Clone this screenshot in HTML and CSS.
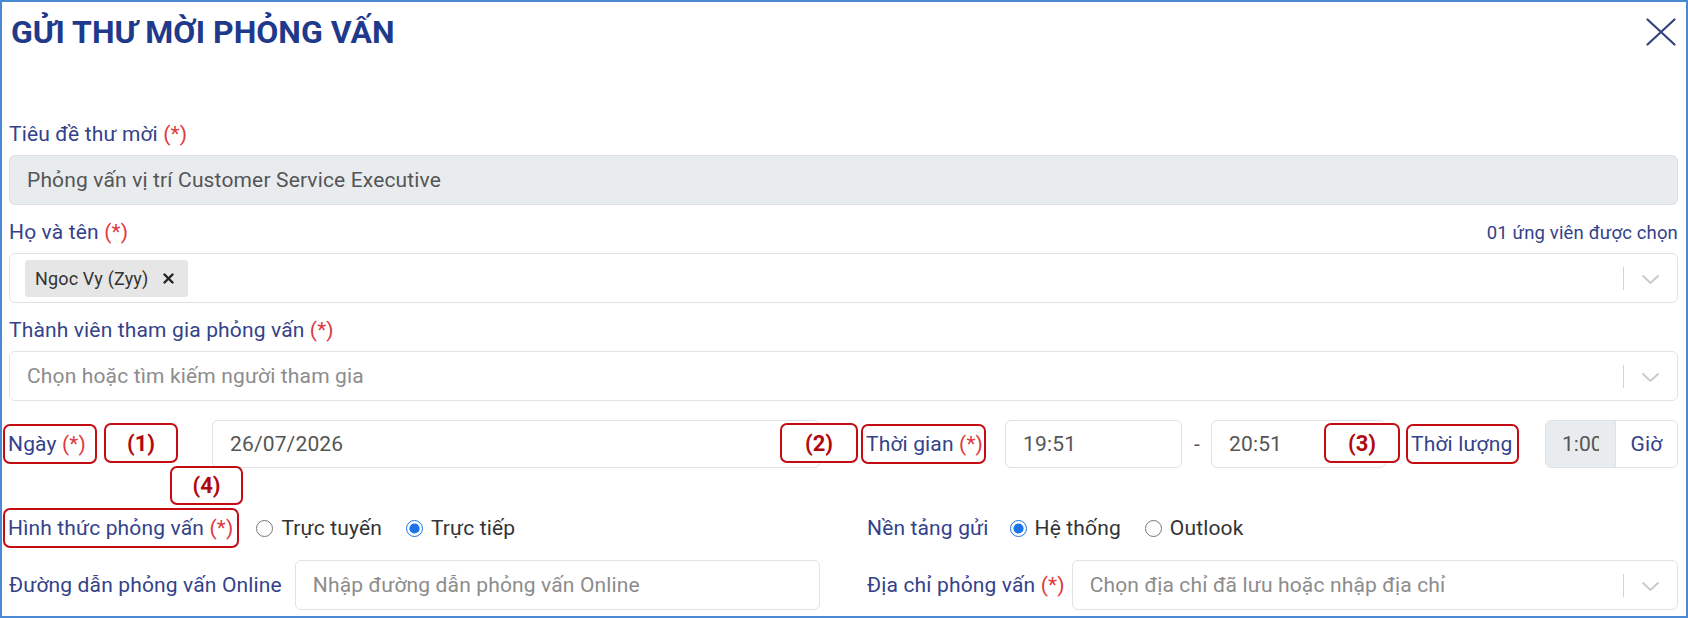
FILE: index.html
```html
<!DOCTYPE html>
<html lang="vi">
<head>
  <meta charset="UTF-8">
  <meta name="viewport" content="width=device-width, initial-scale=1.0">
  <title>Gửi thư mời phỏng vấn</title>
  <link rel="stylesheet" href="styles.css">
</head>
<body>

  <div class="modal">
    <header class="modal-head">
      <h1>GỬI THƯ MỜI PHỎNG VẤN</h1>
      <button class="close" type="button" aria-label="Đóng">
        <svg width="30" height="28" viewBox="0 0 30 28"><path d="M1.5 1.5L28.5 26.5M28.5 1.5L1.5 26.5" stroke="#34427f" stroke-width="2.2" stroke-linecap="round" fill="none"/></svg>
      </button>
    </header>

    <form class="modal-body">
      <!-- Tiêu đề -->
      <div class="field">
        <label class="lbl">Tiêu đề thư mời <span class="req">(*)</span></label>
        <input class="ctl ctl-readonly" type="text" value="Phỏng vấn vị trí Customer Service Executive" readonly>
      </div>

      <!-- Ứng viên -->
      <div class="field">
        <div class="lbl-row">
          <label class="lbl">Họ và tên <span class="req">(*)</span></label>
          <span class="count">01 ứng viên được chọn</span>
        </div>
        <div class="select">
          <div class="select-value">
            <span class="chip">Ngoc Vy (Zyy)
              <svg class="chip-x" width="11" height="11" viewBox="0 0 11 11"><path d="M1.5 1.5L9.5 9.5M9.5 1.5L1.5 9.5" stroke="#222" stroke-width="2.4" stroke-linecap="round"/></svg>
            </span>
          </div>
          <span class="sep"></span>
          <span class="caret"><svg width="19" height="11" viewBox="0 0 19 11"><polyline points="1.5,1.5 9.5,9 17.5,1.5" fill="none" stroke="#c9c9c9" stroke-width="1.8"/></svg></span>
        </div>
      </div>

      <!-- Thành viên -->
      <div class="field">
        <label class="lbl">Thành viên tham gia phỏng vấn <span class="req">(*)</span></label>
        <div class="select">
          <div class="select-value placeholder">Chọn hoặc tìm kiếm người tham gia</div>
          <span class="sep"></span>
          <span class="caret"><svg width="19" height="11" viewBox="0 0 19 11"><polyline points="1.5,1.5 9.5,9 17.5,1.5" fill="none" stroke="#c9c9c9" stroke-width="1.8"/></svg></span>
        </div>
      </div>

      <!-- Ngày / thời gian -->
      <div class="row row-date">
        <div class="col">
          <div class="lbl-cell">
            <span class="lbl mark mark-wide">Ngày&nbsp;<span class="req">(*)</span></span>
          </div>
          <input class="ctl grow" type="text" value="26/07/2026">
        </div>
        <div class="col">
          <span class="lbl mark mark-tight">Thời gian&nbsp;<span class="req">(*)</span></span>
          <input class="ctl time t-start" type="text" value="19:51">
          <span class="dash">-</span>
          <input class="ctl time t-end" type="text" value="20:51">
          <span class="lbl mark mark-dur">Thời lượng</span>
          <div class="duration">
            <input class="dur-val" type="text" value="1:00" readonly>
            <span class="dur-unit">Giờ</span>
          </div>
        </div>

        <span class="badge b1">(1)</span>
        <span class="badge b2">(2)</span>
        <span class="badge b3">(3)</span>
        <span class="badge b4">(4)</span>
      </div>

      <!-- Hình thức / nền tảng -->
      <div class="row row-radio">
        <div class="col">
          <span class="lbl mark mark-type">Hình thức phỏng vấn&nbsp;<span class="req">(*)</span></span>
          <div class="radios first">
            <label class="opt"><input type="radio" name="mode"> Trực tuyến</label>
            <label class="opt"><input type="radio" name="mode" checked> Trực tiếp</label>
          </div>
        </div>
        <div class="col">
          <span class="lbl">Nền tảng gửi</span>
          <div class="radios platform">
            <label class="opt"><input type="radio" name="platform" checked> Hệ thống</label>
            <label class="opt"><input type="radio" name="platform"> Outlook</label>
          </div>
        </div>
      </div>

      <!-- Link / địa chỉ -->
      <div class="row row-place">
        <div class="col">
          <span class="lbl">Đường dẫn phỏng vấn Online</span>
          <input class="ctl grow link" type="text" placeholder="Nhập đường dẫn phỏng vấn Online">
        </div>
        <div class="col">
          <span class="lbl">Địa chỉ phỏng vấn&nbsp;<span class="req">(*)</span></span>
          <div class="select grow addr">
            <div class="select-value placeholder">Chọn địa chỉ đã lưu hoặc nhập địa chỉ</div>
            <span class="sep"></span>
            <span class="caret"><svg width="19" height="11" viewBox="0 0 19 11"><polyline points="1.5,1.5 9.5,9 17.5,1.5" fill="none" stroke="#c9c9c9" stroke-width="1.8"/></svg></span>
          </div>
        </div>
      </div>
    </form>
  </div>

</body>
</html>
```

FILE: styles.css
```css
* {
  box-sizing: border-box;
}

body {
  margin: 0;
  background: #fff;
  font-family: Roboto, "Noto Sans", sans-serif;
}

.modal {
  width: 1688px;
  height: 618px;
  border: 2px solid #4a8ad4;
  padding: 0 8px 0 7px;
  font-size: 21px;
  letter-spacing: 0.15px;
  color: #555;
  overflow: hidden;
}

.modal-head {
  display: flex;
  align-items: center;
  justify-content: space-between;
  height: 60px;
}

.modal-head h1 {
  margin: 0 0 0 2px;
  font-size: 32px;
  line-height: 40px;
  font-weight: 700;
  letter-spacing: 0;
  color: #1f3a8a;
}

.close {
  border: none;
  background: none;
  padding: 0;
  margin-right: 2px;
  display: flex;
}

.modal-body {
  padding-top: 60px;
}

.field {
  margin-bottom: 15px;
}

.lbl {
  display: block;
  line-height: 24px;
  margin-bottom: 9px;
  color: #33428a;
  white-space: nowrap;
}

.req {
  color: #e0393e;
}

.lbl-row {
  display: flex;
  justify-content: space-between;
  align-items: baseline;
}

.count {
  font-size: 18.5px;
  color: #33428a;
}

.ctl {
  display: block;
  width: 100%;
  height: 50px;
  border: 1px solid #dfe2e6;
  border-radius: 6px;
  padding: 0 17px;
  font: inherit;
  letter-spacing: inherit;
  color: #555;
  background: #fff;
  outline: none;
}

.ctl::placeholder {
  color: #8c8c8c;
}

.ctl-readonly {
  background: #e9ecef;
  border-color: #dcdfe3;
}

.select {
  display: flex;
  align-items: center;
  height: 50px;
  border: 1px solid #dfe2e6;
  border-radius: 6px;
  background: #fff;
}

.select-value {
  flex: 1;
  padding-left: 15px;
  white-space: nowrap;
  overflow: hidden;
}

.select-value.placeholder {
  padding-left: 17px;
  color: #8c8c8c;
}

.chip {
  display: inline-flex;
  align-items: center;
  height: 37px;
  padding: 0 14px 0 10px;
  border-radius: 3px;
  background: #e6e6e6;
  font-size: 18px;
  color: #333;
}

.chip-x {
  margin-left: 15px;
}

.sep {
  width: 1px;
  height: 23px;
  background: #d4d4d4;
}

.caret {
  width: 53px;
  display: flex;
  justify-content: center;
  padding-top: 2px;
}

/* two column rows */
.row {
  display: grid;
  grid-template-columns: 1fr 1fr;
  column-gap: 47px;
  position: relative;
}

.col {
  display: flex;
  align-items: center;
}

.col .lbl {
  margin-bottom: 0;
}

.grow {
  flex: 1;
  width: auto;
}

/* sits after .field, so this margin wins over its 15px bottom */
.row-date {
  margin-top: 19px;
  height: 48px;
}

.row-date .ctl {
  height: 48px;
}

.lbl-cell {
  width: 203px;
  flex: none;
}

.mark {
  display: inline-flex;
  align-items: center;
  height: 40px;
  margin-left: -6px;
  padding: 0 4px 0 3px;
  border: 2.5px solid #c30d12;
  border-radius: 7px;
}

.mark-wide {
  padding-right: 9px;
}

.mark-tight {
  padding-right: 1px;
}

.mark-dur {
  margin-left: 20px;
  padding-right: 5px;
}

.mark-type {
  padding-right: 4px;
}

.time {
  width: 177px;
  flex: none;
}

.t-start {
  margin-left: 19px;
}

.t-end {
  width: 175px;
}

.dash {
  margin: 0 11px 0 12px;
  color: #555;
}

.duration {
  display: flex;
  margin-left: auto;
  height: 48px;
  border: 1px solid #dfe2e6;
  border-radius: 6px;
  overflow: hidden;
}

.dur-val {
  width: 70px;
  border: none;
  border-right: 1px solid #dfe2e6;
  background: #e9ecef;
  padding: 0 16px;
  font: inherit;
  color: #555;
  outline: none;
}

.dur-unit {
  width: 61px;
  display: flex;
  align-items: center;
  justify-content: center;
  color: #33428a;
}

.badge {
  position: absolute;
  top: 3px;
  height: 40px;
  display: flex;
  align-items: center;
  justify-content: center;
  border: 2.5px solid #c30d12;
  border-radius: 7px;
  background: #fff;
  font-weight: 700;
  font-size: 22px;
  letter-spacing: 0;
  color: #b00a0f;
}

.b1 { left: 95px; width: 74px; }
.b2 { left: 771px; width: 78px; }
.b3 { left: 1315px; width: 76px; }
.b4 { left: 161px; top: 46px; width: 73px; height: 39px; }

.row-radio {
  margin-top: 40px;
  height: 40px;
}

.radios {
  display: flex;
  align-items: center;
  gap: 24px;
}

.radios.first {
  margin-left: 17px;
}

.radios.platform {
  margin-left: 21px;
}

.opt {
  display: flex;
  align-items: center;
  gap: 8px;
  color: #333;
}

.opt input {
  width: 17px;
  height: 17px;
  margin: 0;
  accent-color: #1a73e8;
}

.row-place {
  margin-top: 12px;
  height: 50px;
}

.row-place .ctl,
.row-place .select {
  height: 50px;
}

.link {
  margin-left: 13px;
}

.addr {
  margin-left: 7px;
}
```
